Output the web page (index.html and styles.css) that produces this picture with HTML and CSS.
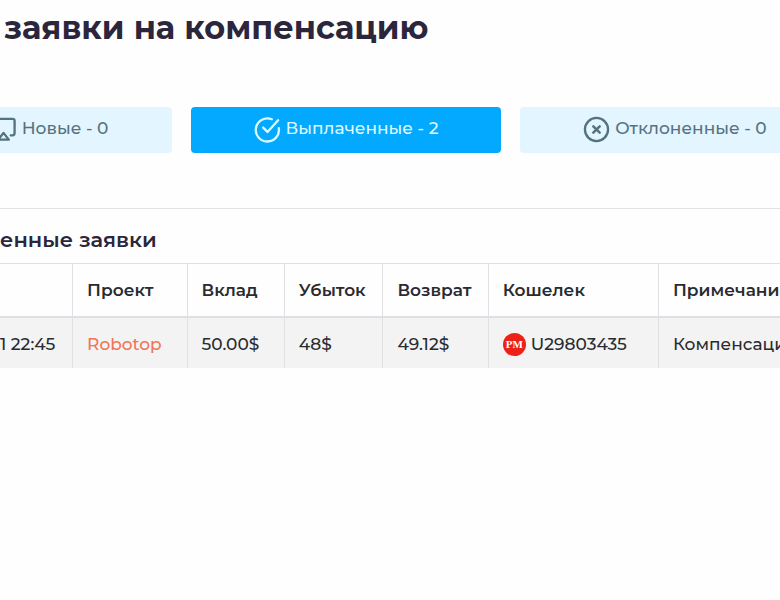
FILE: index.html
```html
<!DOCTYPE html>
<html lang="ru">
<head>
<meta charset="utf-8">
<title>Заявки на компенсацию</title>
<link rel="stylesheet" href="styles.css">
</head>
<body>
<main class="page">
  <h1 class="title">заявки на компенсацию</h1>
  <nav class="tabs">
    <button class="tab" type="button">
      <svg class="icon" viewBox="0 0 28 28" aria-hidden="true"><path d="M8 20H5.500a3 3 0 0 1-3-3V6a3 3 0 0 1 3-3h18a2 2 0 0 1 2 2v13a2 2 0 0 1-2 2H21.500M14 17.500l5.500 7h-11z"/></svg>
      <span class="label">Новые - 0</span>
    </button>
    <button class="tab tab-active" type="button">
      <svg class="icon" viewBox="0 0 28 28" aria-hidden="true"><path d="M25.700 12.500A12 12 0 1 1 18.500 3.400M9.500 12l4.500 4.500L25 4.500"/></svg>
      <span class="label">Выплаченные - 2</span>
    </button>
    <button class="tab" type="button">
      <svg class="icon" viewBox="0 0 28 28" aria-hidden="true"><circle cx="14" cy="14" r="12"/><path d="M10.700 10.700l6.600 6.600M17.300 10.700l-6.600 6.600" stroke-width="2.600"/></svg>
      <span class="label">Отклоненные - 0</span>
    </button>
  </nav>
  <section class="requests">
    <h2 class="subtitle">енные заявки</h2>
    <table class="table">
      <colgroup><col class="c-date"><col class="c-project"><col class="c-deposit"><col class="c-loss"><col class="c-refund"><col class="c-wallet"><col></colgroup>
      <thead>
        <tr><th></th><th>Проект</th><th>Вклад</th><th>Убыток</th><th>Возврат</th><th>Кошелек</th><th>Примечание</th></tr>
      </thead>
      <tbody>
        <tr>
          <td class="date">1 22:45</td>
          <td><a class="link" href="#">Robotop</a></td>
          <td>50.00$</td>
          <td>48$</td>
          <td>49.12$</td>
          <td><span class="wallet"><span class="badge">PM</span>U29803435</span></td>
          <td>Компенсация</td>
        </tr>
      </tbody>
    </table>
  </section>
</main>
</body>
</html>
```
FILE: styles.css
```css
* { box-sizing: border-box; }
body {
  margin: 0;
  background: #fefefe;
  color: #292b2f;
  font: 500 17px/24px Montserrat, Inter, "Open Sans", sans-serif;
}
.page { overflow: hidden; padding-top: 8px; }
.title {
  margin: 0 0 59px;
  padding-left: 4px;
  color: #2b263b;
  font-size: 32px;
  line-height: 40px;
  font-weight: 700;
  white-space: nowrap;
}
.tabs {
  display: grid;
  grid-template-columns: 246fr 310fr 310fr;
  gap: 19px;
  margin: 0 -50px 55px -74px;
}
.tab {
  display: flex;
  align-items: center;
  justify-content: center;
  gap: 5px;
  min-width: 0;
  padding: 9px 0 10px;
  border: 0;
  border-radius: 4px;
  background: #e3f5ff;
  color: #54737f;
  font: inherit;
  white-space: nowrap;
}
.tab-active { background: #03a9ff; color: #dcfaff; }
.label { padding-bottom: 3px; }
.icon {
  width: 27px;
  height: 27px;
  fill: none;
  stroke: currentColor;
  stroke-width: 2.4;
  stroke-linecap: round;
  stroke-linejoin: round;
}
.requests { border-top: 1px solid #e1e2e5; padding-top: 16px; }
.subtitle {
  margin: 0 0 8px;
  color: #2b263b;
  font-size: 21px;
  line-height: 30px;
  font-weight: 600;
  white-space: nowrap;
}
.table {
  width: calc(100% + 50px);
  table-layout: fixed;
  border-collapse: separate;
  border-spacing: 0;
  border-top: 1px solid #dee0e4;
}
.c-date { width: 8.8%; }
.c-project { width: 13.8%; }
.c-deposit { width: 11.7%; }
.c-loss { width: 11.9%; }
.c-refund { width: 12.7%; }
.c-wallet { width: 20.5%; }
.table th, .table td {
  padding: 14px 0 12px 14px;
  border-right: 1px solid #dee0e4;
  text-align: left;
  white-space: nowrap;
}
.table th { padding: 14px 0 14px 14px; border-bottom: 2px solid #dee0e4; font-weight: 600; }
.table td { background: #f3f3f3; }
.table .date { padding-left: 0; padding-right: 18px; text-align: right; }
.link { color: #f27458; text-decoration: none; }
.wallet { display: flex; align-items: center; gap: 5px; }
.badge {
  width: 23px;
  border-radius: 50%;
  background: #ee2118;
  color: #fff;
  font: 700 11px/23px "Liberation Serif", serif;
  text-align: center;
}
```
